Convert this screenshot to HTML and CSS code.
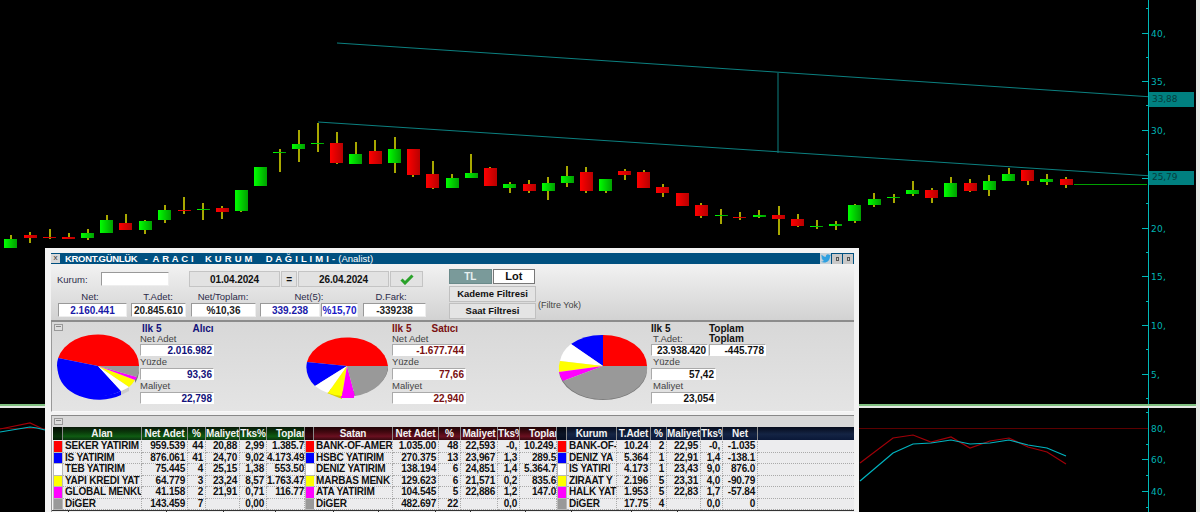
FILE: index.html
```html
<!DOCTYPE html>
<html lang="tr">
<head>
<meta charset="utf-8">
<title>Aracı Kurum Dağılımı</title>
<link rel="stylesheet" href="styles.css">
</head>
<body>
<div class="stage">
<svg class="chart" width="1200" height="512" viewBox="0 0 1200 512">
<defs>
<linearGradient id="gG"><stop offset="0" stop-color="#00ff00"/><stop offset="1" stop-color="#00a000"/></linearGradient>
<linearGradient id="gR"><stop offset="0" stop-color="#ff0000"/><stop offset="1" stop-color="#b80000"/></linearGradient>
</defs>
<rect class="bg" x="0" y="0" width="1195" height="405"/>
<g class="trend">
<path d="M337 43L1168 98M318 122L1168 177M778 73V153"/>
</g>
<g class="wicks">
<path d="M11 235V248M30 232V243M50 229V239M69 233V239M88 229V240M107 215V233M126 214V230M145 220V234M165 205V223M184 197V214M203 203V220M222 206V219M241 190V212M299 130V162M318 123V152M280 149V172M337 132V164M356 142V164M375 140V164M395 137V173M413 149V177M433 161V189M452 174V188M471 154V178M490 167V186M510 182V193M529 180V193M548 177V200M567 166V187M586 167V193M606 179V193M625 169V180M644 170V188M663 184V197M682 193V206M701 203V218M721 209V224M740 212V220M759 210V218M779 206V235M798 214V227M817 220V229M836 221V230M855 204V223M874 193V207M894 194V203M913 181V196M932 188V203M951 177V197M970 179V192M989 175V196M1009 168V181M1028 170V185M1047 174V185M1066 177V188"/>
</g>
<g class="up">
<rect x="4" y="239" width="13" height="9"/><rect x="81" y="233" width="13" height="5"/><rect x="100" y="220" width="13" height="13"/><rect x="139" y="221" width="13" height="9"/><rect x="158" y="210" width="13" height="10"/><rect x="197" y="209" width="13" height="1"/><rect x="235" y="190" width="13" height="21"/><rect x="254" y="167" width="13" height="19"/><rect x="273" y="152" width="13" height="1"/><rect x="292" y="144" width="13" height="5"/><rect x="311" y="143" width="13" height="1"/><rect x="349" y="154" width="13" height="10"/><rect x="388" y="149" width="13" height="14"/><rect x="446" y="178" width="13" height="10"/><rect x="465" y="173" width="13" height="5"/><rect x="503" y="184" width="13" height="4"/><rect x="542" y="183" width="13" height="8"/><rect x="561" y="176" width="13" height="7"/><rect x="599" y="179" width="13" height="12"/><rect x="715" y="215" width="13" height="1"/><rect x="753" y="215" width="13" height="2"/><rect x="810" y="226" width="13" height="1"/><rect x="829" y="224" width="13" height="2"/><rect x="848" y="205" width="13" height="16"/><rect x="868" y="199" width="13" height="6"/><rect x="887" y="197" width="13" height="1"/><rect x="906" y="190" width="13" height="4"/><rect x="944" y="183" width="13" height="14"/><rect x="983" y="181" width="13" height="9"/><rect x="1002" y="174" width="13" height="7"/><rect x="1040" y="179" width="13" height="3"/>
</g>
<g class="down">
<rect x="24" y="235" width="13" height="3"/><rect x="43" y="237" width="13" height="1"/><rect x="62" y="237" width="13" height="2"/><rect x="119" y="223" width="13" height="7"/><rect x="178" y="210" width="13" height="1"/><rect x="216" y="208" width="13" height="4"/><rect x="330" y="143" width="13" height="20"/><rect x="369" y="151" width="13" height="13"/><rect x="407" y="149" width="13" height="26"/><rect x="426" y="174" width="13" height="14"/><rect x="484" y="168" width="13" height="18"/><rect x="523" y="184" width="13" height="7"/><rect x="580" y="172" width="13" height="19"/><rect x="618" y="171" width="13" height="4"/><rect x="637" y="172" width="13" height="16"/><rect x="656" y="187" width="13" height="6"/><rect x="676" y="193" width="13" height="13"/><rect x="695" y="205" width="13" height="11"/><rect x="733" y="217" width="13" height="1"/><rect x="772" y="215" width="13" height="4"/><rect x="791" y="219" width="13" height="7"/><rect x="925" y="190" width="13" height="8"/><rect x="964" y="183" width="13" height="8"/><rect x="1021" y="170" width="13" height="11"/><rect x="1060" y="179" width="13" height="6"/>
</g>
<path class="last" d="M1074 184.500H1147"/>
<g class="axis">
<path d="M1148.500 0V404M1148.500 408V512"/>
<path d="M1146 8.500H1149M1142 33.500H1149M1146 57.500H1149M1142 81.500H1149M1146 105.500H1149M1142 130.500H1149M1146 154.500H1149M1142 178.500H1149M1146 203.500H1149M1142 228.500H1149M1146 252.500H1149M1142 276.500H1149M1146 301.500H1149M1142 325.500H1149M1146 349.500H1149M1142 374.500H1149M1146 398.500H1149"/>
<path d="M1146 412.500H1149M1142 428.500H1149M1146 444.500H1149M1142 459.500H1149M1146 475.500H1149M1142 491.500H1149M1146 507.500H1149"/>
</g>
<g class="labels">
<text x="1151" y="37">40,</text><text x="1151" y="85">35,</text><text x="1151" y="134">30,</text><text x="1151" y="232">20,</text><text x="1151" y="280">15,</text><text x="1151" y="329">10,</text><text x="1151" y="378">5,</text>
<text x="1151" y="432">80,</text><text x="1151" y="463">60,</text><text x="1151" y="495">40,</text>
</g>
<rect class="tag" x="1149" y="92" width="45" height="15"/>
<rect class="tag" x="1149" y="171" width="45" height="14"/>
<g class="tagtext"><text x="1152" y="102">33,88</text><text x="1152" y="180">25,79</text></g>
<rect class="sep" x="0" y="404" width="1200" height="4"/>
<rect class="sepline" x="0" y="404" width="1196" height="2"/>
<rect class="sep" x="1196" y="0" width="4" height="512"/>
<path class="hline" d="M0 428.500H1148"/>
<path class="osc-red" d="M0 429L30 423L43 429M860 463L893 438L913 435L931 442L951 437L970 448L990 441L1009 438L1028 447L1047 452L1066 464"/>
<path class="osc-cyan" d="M0 432L30 427L37 428L45 430M860 481L893 453L913 444L931 443L951 440L970 444L990 443L1009 440L1028 445L1047 448L1066 456"/>
</svg>

<section class="win">
<header class="titlebar">
<span class="sysbtn">x</span>
<span class="title"><span class="tk">KRONT.GÜNLÜK</span><span class="gap7">-</span><span class="sp gap5">A R A C I</span><span class="sp gap11">K U R U M</span><span class="sp gap13">D A Ğ I L I M I</span><span class="gap3">-</span><span class="light gap3">(Analist)</span></span>
<span class="birdbox"><svg width="10" height="9" viewBox="0 0 24 20"><path fill="#2fa0e0" d="M24 2.400c-.9.400-1.800.700-2.800.800 1-.600 1.800-1.600 2.200-2.700-1 .6-2 1-3.100 1.200C19.300.7 18 0 16.600 0c-2.700 0-4.900 2.200-4.900 4.900 0 .4 0 .8.100 1.100C7.700 5.800 4.100 3.900 1.700.9 1.200 1.600 1 2.500 1 3.400c0 1.700.9 3.200 2.200 4.100-.8 0-1.600-.2-2.200-.6v.1c0 2.400 1.700 4.400 3.900 4.800-.7.200-1.500.2-2.200.1.600 2 2.400 3.400 4.600 3.400-1.700 1.300-3.800 2.100-6.100 2.100-.4 0-.8 0-1.200-.1 2.200 1.400 4.800 2.200 7.500 2.200 9.100 0 14-7.500 14-14v-.6c1-.7 1.800-1.600 2.500-2.500z"/></svg></span>
<span class="winbtn"><i></i></span><span class="winbtn"><i></i></span>
</header>

<div class="top">
<div class="top-left">
<div class="row-dates">
<label class="lbl kurum">Kurum:</label>
<span class="input"></span>
<span class="datebox d1">01.04.2024</span>
<span class="datebox eq">=</span>
<span class="datebox d2">26.04.2024</span>
<span class="datebox ok"><svg width="14" height="11" viewBox="0 0 14 11"><path fill="none" stroke="#2aa22a" stroke-width="3" d="M1.500 5.500L5 9L12.500 1.500"/></svg></span>
</div>
<div class="stats">
<span class="lbl s1">Net:</span><span class="lbl s2">T.Adet:</span><span class="lbl s3">Net/Toplam:</span><span class="lbl s4">Net(5):</span><span class="lbl s6">D.Fark:</span>
<span class="val blue v1">2.160.441</span><span class="val v2">20.845.610</span><span class="val v3">%10,36</span><span class="val blue v4">339.238</span><span class="val blue v5">%15,70</span><span class="val v6">-339238</span>
</div>
</div>
<div class="top-right">
<div class="toggle"><span class="tbtn on">TL</span><span class="tbtn lot">Lot</span></div>
<span class="fbtn">Kademe Filtresi</span>
<span class="fbtn">Saat Filtresi</span>
</div>
<span class="nofilter">(Filtre Yok)</span>
</div>

<div class="pies">
<span class="collapse"></span>
<div class="group g1">
<svg class="pie" width="84" height="68" viewBox="0 0 84 68">
<path fill="#0000ff" d="M1 33A41 30 0 0 0 64 58L64 62A41 30 0 0 1 1 37Z"/>
<path fill="#cccccc" d="M64 58L72 54V58L64 62Z"/>
<path fill="#777777" d="M82 33A41 30 0 0 1 78 46L78 50A41 30 0 0 0 82 37Z"/>
<path fill="#ff0000" d="M41 33H82A41 31 0 0 0 1.200 25Z"/>
<path fill="#0000ff" d="M41 33L1.200 25A41 31 0 0 0 64 58Z"/>
<path fill="#ffffff" d="M41 33L64 58A41 31 0 0 0 72 54Z"/>
<path fill="#ffff00" d="M41 33L72 54A41 31 0 0 0 78 47Z"/>
<path fill="#ff00ff" d="M41 33L78 47A41 31 0 0 0 80 44Z"/>
<path fill="#999999" d="M41 33L80 44A41 31 0 0 0 82 33Z"/>
</svg>
<div class="info">
<div class="heads"><b class="hd navy">Ilk 5</b><b class="hd navy side">Alıcı</b></div>
<span class="cap first">Net Adet</span><span class="box navy">2.016.982</span>
<span class="cap">Yüzde</span><span class="box navy">93,36</span>
<span class="cap">Maliyet</span><span class="box navy">22,798</span>
</div>
</div>
<div class="group g2">
<svg class="pie" width="84" height="68" viewBox="0 0 84 68">
<path fill="#777777" d="M1 33A41 30 0 0 0 82 33V37A41 30 0 0 1 1 37Z"/>
<path fill="#d8d000" d="M21 55L36 60V66L21 60Z"/>
<path fill="#ff00ff" d="M35 61H48V65H35Z"/>
<path fill="#ff0000" d="M41 33H82A41 31 0 0 0 1 29Z"/>
<path fill="#0000ff" d="M41 33L1 29A41 31 0 0 0 9 53Z"/>
<path fill="#ffffff" d="M41 33L9 53A41 31 0 0 0 22 60Z"/>
<path fill="#ffff00" d="M41 33L22 60A41 31 0 0 0 36 63Z"/>
<path fill="#ff00ff" d="M41 33L36 63A41 31 0 0 0 49 63Z"/>
<path fill="#999999" d="M41 33L49 63A41 31 0 0 0 82 33Z"/>
</svg>
<div class="info">
<div class="heads"><b class="hd maroon">Ilk 5</b><b class="hd maroon side">Satıcı</b></div>
<span class="cap first">Net Adet</span><span class="box maroon">-1.677.744</span>
<span class="cap">Yüzde</span><span class="box maroon">77,66</span>
<span class="cap">Maliyet</span><span class="box maroon">22,940</span>
</div>
</div>
<div class="group g3">
<svg class="pie" width="90" height="68" viewBox="0 0 90 68">
<path fill="#777777" d="M1 33A44 30 0 0 0 89 33V37A44 30 0 0 1 1 37Z"/>
<path fill="#ff0000" d="M45 33H89A44 31 0 0 0 45 2Z"/>
<path fill="#0000ff" d="M45 33V2A44 31 0 0 0 13 11Z"/>
<path fill="#ffffff" d="M45 33L13 11A44 31 0 0 0 2 28Z"/>
<path fill="#ffff00" d="M45 33L2 28A44 31 0 0 0 1 39Z"/>
<path fill="#ff00ff" d="M45 33L1 39A44 31 0 0 0 5 48Z"/>
<path fill="#999999" d="M45 33L5 48A44 31 0 0 0 89 33Z"/>
</svg>
<div class="info wide">
<div class="heads"><b class="hd dark">Ilk 5</b><b class="hd dark side3">Toplam</b></div>
<div class="caprow"><span class="cap ind">T.Adet:</span><b class="hd dark side3b">Toplam</b></div>
<div class="boxrow"><span class="box dark b1">23.938.420</span><span class="box dark b2">-445.778</span></div>
<span class="cap ind">Yüzde</span><span class="box dark">57,42</span>
<span class="cap ind">Maliyet</span><span class="box dark">23,054</span>
</div>
</div>
</div>

<div class="grid-wrap">
<div class="grid-tool"><span class="collapse static"></span></div>
<div class="grid">
<div class="head h-green">
<span class="hc"></span><span class="hc">Alan</span><span class="hc">Net Adet</span><span class="hc">%</span><span class="hc">Maliyet</span><span class="hc">Tks%</span><span class="hc r">Toplam</span>
</div>
<div class="head h-red t2">
<span class="hc"></span><span class="hc">Satan</span><span class="hc">Net Adet</span><span class="hc">%</span><span class="hc">Maliyet</span><span class="hc">Tks%</span><span class="hc r">Toplam</span>
</div>
<div class="head h-navy t3">
<span class="hc"></span><span class="hc">Kurum</span><span class="hc">T.Adet</span><span class="hc">%</span><span class="hc">Maliyet</span><span class="hc">Tks%</span><span class="hc">Net</span><span class="hc fill"></span>
</div>

<div class="t t1">
<i class="sw red"></i><span class="n">SEKER YATIRIM</span><span>959.539</span><span>44</span><span>20,88</span><span>2,99</span><span class="clip">1.385.7</span>
<i class="sw blu"></i><span class="n">IS YATIRIM</span><span>876.061</span><span>41</span><span>24,70</span><span>9,02</span><span class="clip">4.173.49</span>
<i class="sw wht"></i><span class="n">TEB YATIRIM</span><span>75.445</span><span>4</span><span>25,15</span><span>1,38</span><span class="clip">553.50</span>
<i class="sw yel"></i><span class="n">YAPI KREDI YAT</span><span>64.779</span><span>3</span><span>23,24</span><span>8,57</span><span class="clip">1.763.47</span>
<i class="sw mag"></i><span class="n">GLOBAL MENKU</span><span>41.158</span><span>2</span><span>21,91</span><span>0,71</span><span class="clip">116.77</span>
<i class="sw gry"></i><span class="n">DiGER</span><span>143.459</span><span>7</span><span></span><span>0,00</span><span></span>
</div>
<div class="t t2">
<i class="sw red"></i><span class="n">BANK-OF-AMERI</span><span>1.035.00</span><span>48</span><span>22,593</span><span>-0,</span><span class="clip">10.249.</span>
<i class="sw blu"></i><span class="n">HSBC YATIRIM</span><span>270.375</span><span>13</span><span>23,967</span><span>1,3</span><span class="clip">289.5</span>
<i class="sw wht"></i><span class="n">DENIZ YATIRIM</span><span>138.194</span><span>6</span><span>24,851</span><span>1,4</span><span class="clip">5.364.7</span>
<i class="sw yel"></i><span class="n">MARBAS MENK</span><span>129.623</span><span>6</span><span>21,571</span><span>0,2</span><span class="clip">835.6</span>
<i class="sw mag"></i><span class="n">ATA YATIRIM</span><span>104.545</span><span>5</span><span>22,886</span><span>1,2</span><span class="clip">147.0</span>
<i class="sw gry"></i><span class="n">DiGER</span><span>482.697</span><span>22</span><span></span><span>0,0</span><span></span>
</div>
<div class="t t3">
<i class="sw red"></i><span class="n">BANK-OF-</span><span>10.24</span><span>2</span><span>22,95</span><span>-0,</span><span>-1.035</span><span class="fill"></span>
<i class="sw blu"></i><span class="n">DENIZ YA</span><span>5.364</span><span>1</span><span>22,91</span><span>1,4</span><span>-138.1</span><span class="fill"></span>
<i class="sw wht"></i><span class="n">IS YATIRI</span><span>4.173</span><span>1</span><span>23,43</span><span>9,0</span><span>876.0</span><span class="fill"></span>
<i class="sw yel"></i><span class="n">ZIRAAT Y</span><span>2.196</span><span>5</span><span>23,31</span><span>4,0</span><span>-90.79</span><span class="fill"></span>
<i class="sw mag"></i><span class="n">HALK YAT</span><span>1.953</span><span>5</span><span>22,83</span><span>1,7</span><span>-57.84</span><span class="fill"></span>
<i class="sw gry"></i><span class="n">DiGER</span><span>17.75</span><span>4</span><span></span><span>0,0</span><span>0</span><span class="fill"></span>
</div>
</div>
<div class="foot">
<i class="f17"></i><i class="f98"></i><i class="f57"></i><i class="f52"></i><i class="f58"></i><i class="f45"></i><i class="f57"></i><i class="f35"></i><i class="f55"></i><i class="f46"></i><i class="f60"></i><i class="f46"></i>
</div>
</div>
</section>
</div>
</body>
</html>
```
FILE: styles.css
```css
*{box-sizing:border-box}
html,body{margin:0;padding:0;width:1200px;height:512px;overflow:hidden;background:#000}
body{font-family:"Liberation Sans",Arial,sans-serif;color:#111}
.stage{position:relative;width:1200px;height:512px;overflow:hidden}
.chart{position:absolute;left:0;top:0;display:block}
.bg{fill:#000}
.trend path{fill:none;stroke:#0c8080;stroke-width:1}
.wicks path{fill:none;stroke:#a8a800;stroke-width:2}
.up rect{fill:url(#gG)}
.down rect{fill:url(#gR)}
.last{stroke:#00a000;stroke-width:1;fill:none}
.axis path{fill:none;stroke:#00b8b8;stroke-width:1}
.labels text{font:9px "DejaVu Sans",sans-serif;fill:#00b4b4;letter-spacing:.3px}
.tag{fill:#008080}
.tagtext text{font:9px "DejaVu Sans",sans-serif;fill:#063c3c;letter-spacing:-.1px}
.sep{fill:#e4e8e4}
.sepline{fill:#80c080}
.hline{stroke:#5c0000;stroke-width:1;fill:none}
.osc-red{fill:none;stroke:#a00008;stroke-width:1.200}
.osc-cyan{fill:none;stroke:#00b4c0;stroke-width:1.200}

.win{position:absolute;left:45px;top:248px;width:814px;height:264px;background:#f3f3f3;padding:5px 5px 0 6px;display:flex;flex-direction:column;overflow:hidden}
.titlebar{height:11px;background:#005080;display:flex;align-items:center;color:#fff;flex:none}
.sysbtn{width:9px;height:9px;margin:0 5px 0 0;background:#d8d8d8;color:#333;font-size:8px;line-height:8px;text-align:center;flex:none}
.title{font-size:9.500px;font-weight:bold;white-space:nowrap;flex:1;display:flex}
.tk{letter-spacing:-.3px}
.sp{letter-spacing:.2px}
.gap3{margin-left:3px}
.gap5{margin-left:5px}
.gap7{margin-left:7px}
.gap11{margin-left:11px}
.gap13{margin-left:13px}
.light{font-weight:normal}
.birdbox{flex:none;width:11px;height:11px;background:#c4d0d8;display:flex;align-items:center;justify-content:center}
.winbtn{width:10px;height:10px;margin-left:1px;background:#c8c8c8;flex:none;display:flex;align-items:center;justify-content:center}
.winbtn i{width:3px;height:4px;border:1px solid #555;display:block}
.winbtn:last-child{margin-right:1px}

.top{height:58px;display:flex;background:linear-gradient(#f2f2f2,#d2d2d2);border-bottom:2px solid #8c8c8c;flex:none}
.top-left{width:393px;flex:none;padding-top:7px}
.lbl{font-size:9.500px;color:#2c2c4a}
.row-dates{display:flex;align-items:center;height:16px}
.kurum{width:50px;padding-left:6px}
.input{width:68px;height:14px;background:#fff;border:1px solid #999;border-right-color:#eee;border-bottom-color:#eee;margin-right:20px}
.datebox{height:16px;background:#e2e2e2;border:1px solid #c4c4c4;display:flex;align-items:center;justify-content:center;font-size:10px;font-weight:bold;letter-spacing:-.1px;margin-right:1px;color:#111}
.d1,.d2{width:91px}
.eq{width:16px}
.ok{width:33px}
.stats{display:grid;grid-template-columns:73px 60px 69px 61px 42px 63px;margin-left:7px;margin-top:3px;grid-template-rows:13px 15px}
.stats .lbl{text-align:center;line-height:13px}
.s1{padding-right:9px}
.s2{padding-right:6px}
.s3{padding-right:5px}
.s4{grid-column:4 / span 2;padding-right:5px}
.s6{padding-right:7px}
.val{height:14px;background:#fff;border:1px solid;border-color:#999 #eee #eee #999;font-size:10px;font-weight:bold;text-align:center;line-height:13px;color:#222;white-space:nowrap}
.v1{margin-right:4px;color:#1a1aa8}
.v2{margin-right:5px;letter-spacing:-.1px}
.v3{margin-right:4px}
.v4{margin-right:1px;color:#1a1aa8}
.v5{margin-right:5px;color:#1a1ac8}
.top-right{width:87px;margin-left:5px;display:flex;flex-direction:column;gap:1px;padding-top:5px;flex:none}
.toggle{display:flex;gap:1px;height:15px;margin-bottom:1px}
.tbtn{flex:1;font-size:10px;font-weight:bold;text-align:center;line-height:14px}
.on{background:#7a9a9a;color:#e8f0f0;border:1px solid #6a8a8a}
.lot{background:#fff;border:1px solid #777;color:#111;font-size:11px;line-height:12px;margin-right:1px}
.fbtn{height:16px;background:#e4e4e4;border:1px solid #c0c0c0;font-size:9.500px;font-weight:bold;text-align:center;line-height:14px;color:#111}
.nofilter{font-size:9px;color:#444;margin:36px 0 0 2px;white-space:nowrap;height:12px}

.pies{position:relative;height:90px;background:linear-gradient(#d8d8d8,#e4e4e4);border-bottom:1px solid #f8f8f8;border-left:1px solid #999;flex:none;display:flex}
.collapse{position:absolute;left:2px;top:2px;width:9px;height:7px;background:#ddd;border:1px solid #999}
.collapse::after{content:"";display:block;margin:1px;height:1px;background:#888}
.collapse.static{position:static;display:block}
.group{display:flex;flex:none;padding-top:1px}
.g1{width:250px;padding-left:5px}
.g2{width:255px;padding-left:4px}
.g3{padding-left:1px}
.pie{flex:none;margin-top:10px;display:block}
.info{width:74px;display:flex;flex-direction:column;font-size:9.500px;flex:none}
.g1 .info{margin-left:-1px}
.g1 .heads{padding-left:2px}
.g2 .info{margin-left:2px}
.info.wide{width:116px;margin-left:3px}
.heads{display:flex;height:11px;line-height:11px;position:relative;white-space:nowrap}
.hd{font-size:10px;white-space:nowrap}
.g1 .side{margin-left:31px}
.g2 .side{margin-left:20px}
.side3{position:absolute;left:58px}
.navy{color:#12127a}
.maroon{color:#7a1010}
.dark{color:#111}
.cap{height:12px;line-height:12px;color:#444;white-space:nowrap;flex:none}
.cap.first{height:10px;line-height:10px}
.cap.ind{padding-left:2px}
.caprow{display:flex;height:10px;position:relative;flex:none}
.caprow .cap{height:10px;line-height:10px}
.side3b{position:absolute;left:58px;top:0;line-height:10px}
.box{height:12px;width:74px;background:#fff;border:1px solid;border-color:#aaa #fff #fff #aaa;font-size:10px;font-weight:bold;text-align:right;padding-right:1px;line-height:11px;white-space:nowrap;flex:none}
.boxrow{display:flex;width:116px;flex:none}
.b1{width:57px;letter-spacing:-.1px}
.b2{width:57px;margin-left:1px}
.info.wide>.box{width:65px}

.grid-wrap{flex:none;margin-top:3px;border-left:1px solid #999;border-top:1px solid #888}
.grid-tool{height:11px;padding:2px;background:#d8d8d8}
.grid{display:grid;grid-template-columns:252px 252px 1fr;grid-template-rows:13px auto;margin-left:1px;background:#ececee}
.head,.t{display:grid;grid-template-columns:10px 79px 46px 18px 34px 27px 38px}
.head.t2,.t.t2{grid-template-columns:9px 79px 46px 22px 37px 22px 37px}
.head.t3,.t.t3{grid-template-columns:10px 50px 34px 16px 34px 22px 35px 1fr}
.hc{font-size:10px;font-weight:bold;color:#f2f2f2;text-align:center;line-height:13px;border-right:1px solid #8a8a8a;overflow:hidden;white-space:nowrap;letter-spacing:-.1px}
.hc:first-child{background:rgba(0,0,0,.45)}
.hc.r{text-align:left;padding-left:9px}
.hc.fill{border-right:0}
.h-green{background:linear-gradient(#081808,#0a3a0a 40%,#0f5c12 72%,#0a3410)}
.h-red{background:linear-gradient(#1e0406,#440810 40%,#6a1020 72%,#380810)}
.h-navy{background:linear-gradient(#060c1c,#142444 55%,#0a1838)}
.t{grid-auto-rows:11.500px;margin-top:1px;background:#b8b8b8}
.t>span{font-size:10px;letter-spacing:-.2px;font-weight:bold;line-height:10px;white-space:nowrap;text-align:right;padding-right:2px;overflow:hidden;background:#ececee;border-bottom:1px dotted #aaa;border-right:1px dotted #aaa;color:#101010}
.t>span.n{text-align:left;padding-left:2px;padding-right:0}
.t>span.clip{text-align:right;padding-right:0}
.t>span.fill{border-right:0}
.sw{display:block;margin:0 1px 1px}
.t2 .sw{margin:0 0 1px 1px}
.red{background:#f00}
.blu{background:#00f}
.wht{background:#fff}
.yel{background:#ff0}
.mag{background:#f0f}
.gry{background:#999}
.foot{display:flex;height:3px;background:#efefef;border-top:1px solid #333}
.foot i{display:block;flex:none;height:2px;border-right:1px solid #333}
.f17{width:17px}
.f98{width:98px}
.f57{width:57px}
.f52{width:52px}
.f58{width:58px}
.f45{width:45px}
.f35{width:35px}
.f55{width:55px}
.f46{width:46px}
.f60{width:60px}
```
